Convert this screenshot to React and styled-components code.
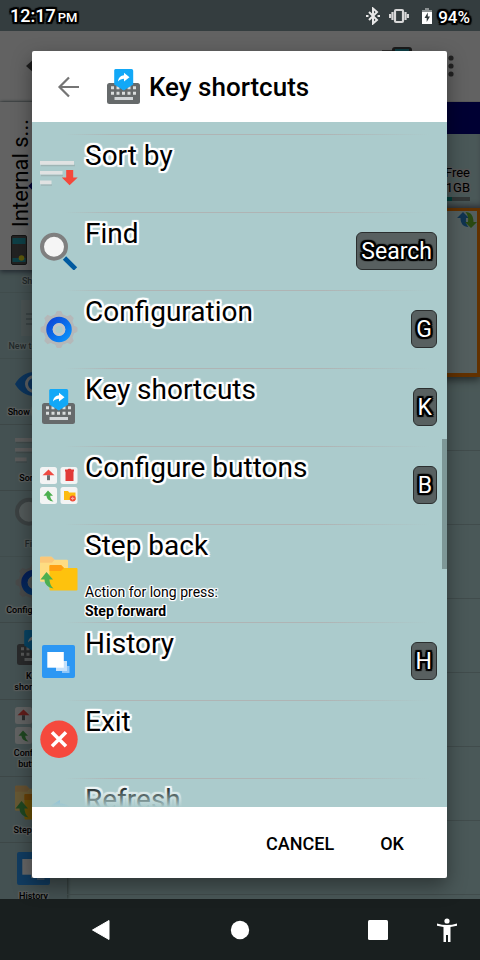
import React from "react";
import styled, { createGlobalStyle, css } from "styled-components";

const Global = createGlobalStyle`
  * { box-sizing: border-box; }
  html, body { margin: 0; background: #191f1f; }
  body { font-family: Roboto, "Liberation Sans", sans-serif; color: #000; }
  button { font: inherit; color: inherit; background: none; border: 0; padding: 0; cursor: pointer; }
  ul { list-style: none; margin: 0; padding: 0; }
  h1, h2, p { margin: 0; }
  svg { display: block; flex: none; }
`;

/* Rounded halo drawn behind the glyphs. */
const wideHalo = (color) => css`
  text-shadow:
    2px 0 1px ${color}, -2px 0 1px ${color}, 0 2px 1px ${color}, 0 -2px 1px ${color},
    2px 2px 1px ${color}, -2px 2px 1px ${color}, 2px -2px 1px ${color}, -2px -2px 1px ${color},
    1px 1px 0 ${color}, -1px 1px 0 ${color}, 1px -1px 0 ${color}, -1px -1px 0 ${color},
    2px 0 0 ${color}, -2px 0 0 ${color}, 0 2px 0 ${color}, 0 -2px 0 ${color};
`;

const thinHalo = (color) => css`
  text-shadow:
    1px 0 0 ${color}, -1px 0 0 ${color}, 0 1px 0 ${color}, 0 -1px 0 ${color},
    1px 1px 1px ${color}, -1px 1px 1px ${color}, 1px -1px 1px ${color}, -1px -1px 1px ${color},
    0 0 2px ${color}, 0 0 2px ${color};
`;

/* ---------- Icons ---------- */

const Icon = ({ size = 38, children }) => (
  <svg width={size} height={size} viewBox="0 0 38 38" aria-hidden="true">{children}</svg>
);

const SortIcon = () => (
  <Icon>
    <path d="M1 11.500h34M1 21.500h22M1 31h11" stroke="#9fb5b5" strokeWidth="1.500" />
    <path d="M0 7h34v3.800H0zM0 17h22.500v3.500H0zM0 26.500h11.500v3.700H0z" fill="#e0e2e2" />
    <path d="M26.200 16h7v7.500h4.500L29.600 31.300l-7.800-7.800h4.400z" fill="#f4483b" />
  </Icon>
);

const FindIcon = () => (
  <Icon>
    <path d="M24.500 26L35.500 37" stroke="#015a9f" strokeWidth="4.600" />
    <circle cx="14" cy="14.700" r="12" fill="#f5f5f5" stroke="#7f7f7f" strokeWidth="4" />
  </Icon>
);

const GearIcon = () => (
  <Icon>
    <defs>
      <linearGradient id="ring" x1="0" y1="0" x2="1" y2="1">
        <stop offset="0" stopColor="#0d47d8" />
        <stop offset="1" stopColor="#0a91fb" />
      </linearGradient>
    </defs>
    <circle cx="19" cy="19.500" r="13.500" fill="none" stroke="#b5b8b9" strokeWidth="4" />
    {[0, 45, 90, 135, 180, 225, 270, 315].map((a) => (
      <path key={a} d="M17 1.500h4l2.300 5.500h-8.600z" fill="#b5b8b9" stroke="#b5b8b9" strokeLinejoin="round" transform={`rotate(${a} 19 19.500)`} />
    ))}
    <circle cx="19" cy="19.500" r="9.500" fill="none" stroke="url(#ring)" strokeWidth="6.500" />
    <circle cx="19" cy="19.500" r="5" fill="none" stroke="#c3c6c8" strokeWidth="2.800" />
  </Icon>
);

const KeyboardIcon = () => (
  <Icon>
    <rect x="2" y="15" width="33" height="21" rx="2.500" fill="#666a6b" />
    <path d="M6 19.700h25M6 25.200h26" stroke="#dadddd" strokeWidth="3" strokeDasharray="3 2.500" />
    <path d="M9.500 30.500h18.500" stroke="#d2d6d8" strokeWidth="3" />
    <path d="M10.500 1h16q1.700 0 1.700 1.700V16.500L18.800 22.500 9.200 16.500V2.500Q9.200 1 10.500 1z" fill="#12a8f7" />
    <path d="M13 13.500c.5-4.300 3-6 6-6.300V4.800l5.500 4.500-5.500 4.200v-2.800c-2.500 0-4.300.8-6 2.800z" fill="#fff" />
  </Icon>
);

const TilesIcon = () => (
  <Icon>
    <g fill="#f3f4f4">
      <rect x="0" y="1" width="17" height="17" rx="2.500" />
      <rect x="20.500" y="1" width="17" height="17" rx="2.500" />
      <rect x="0" y="21" width="17" height="17" rx="2.500" />
      <rect x="20.500" y="21" width="17" height="17" rx="2.500" />
    </g>
    <path d="M8.500 3.500L14.500 9.200h-12z" fill="#ef4a42" />
    <path d="M8.500 9.200v5" stroke="#6b7072" strokeWidth="3" />
    <path d="M25 3.500h2.500l1-.8h2l1 .8H34V5.500h-9zM25.500 5.500h8V15h-8z" fill="#e13a38" />
    <path d="M8 24.500l5 5.300h-2.800c.2 2.500 1.300 4.200 3.300 5.700-4.300-.3-6.700-2.500-7-5.700H3.500z" fill="#4caf50" />
    <path d="M24 25h4l1.200 1.500h6.300V34H24z" fill="#fdbb10" />
    <circle cx="32.700" cy="32.500" r="3" fill="#ef4a36" />
    <path d="M31 32.500h3.400M32.700 30.800v3.400" stroke="#f7a99f" />
  </Icon>
);

const FoldersIcon = () => (
  <Icon>
    <path d="M1 2.700h10.500l3 3H27q1 0 1 1V27.700H1q-1 0-1-1v-23q0-1 1-1z" fill="#fedc82" />
    <path d="M1 2.700h10.500l3 3-2.500 3H0v-5q0-1 1-1z" fill="#fbc778" />
    <path d="M10.500 11H21l3 3h12.500q1 0 1 1v20.600q0 1-1 1H10.500q-1 0-1-1V12q0-1 1-1z" fill="#fec20d" />
    <path d="M10.500 11H21l3 3-3 3H9.500v-5q0-1 1-1z" fill="#ff9f12" />
    <path d="M6.500 18L13 25.500H9.500c.2 4.300 1.500 6.500 4 9-5.500-1-8.800-4-9-9H.5z" fill="#4caf50" />
  </Icon>
);

const HistoryIcon = () => (
  <Icon>
    <rect x="2" y="3" width="33" height="33" rx="2" fill="#2c97f3" />
    <path d="M22 24h7.500v7H22z" fill="#8fc6f8" />
    <path d="M16 19h11v10H16z" fill="#c5e1fb" />
    <path d="M7.300 10h16.500v15.700H7.300z" fill="#fff" />
  </Icon>
);

const ExitIcon = () => (
  <Icon>
    <circle cx="19" cy="19.300" r="18.700" fill="#f5493d" />
    <path d="M12 12.300L26 26.300M26 12.300L12 26.300" stroke="#fff" strokeWidth="3.500" />
  </Icon>
);

const RefreshIcon = () => (
  <Icon>
    <path d="M11 7.500L20 2v3.500c9 0 14 6 13 14-2-5-6-9-13-9V14z" fill="#4cadf8" />
    <path d="M26 31l-7 6v-3.500c-9 0-15-7-14-15 2 5 6 9 14 9V24z" fill="#8bc34a" />
  </Icon>
);

const EyeIcon = () => (
  <Icon>
    <path d="M0 19C9 3 29 3 38 19 29 35 9 35 0 19z" fill="#1c82e8" />
    <circle cx="19" cy="19" r="7.500" fill="none" stroke="#e8eef2" strokeWidth="3" />
  </Icon>
);

const NoteIcon = () => (
  <Icon>
    <path d="M6 1h26v36H6z" fill="#c9d4d4" />
    <path d="M11 15h16M11 20h16M11 25h16" stroke="#7f8d8d" strokeWidth="2" />
  </Icon>
);

const DeviceIcon = () => (
  <svg width="30" height="38" viewBox="0 0 30 38" aria-hidden="true">
    <path d="M0 3h10v32H0z" fill="#777" />
    <rect x="10" y="0" width="20" height="38" rx="3" fill="#444" />
    <path d="M13 2h14v30H13z" fill="#259fae" />
  </svg>
);

const BackArrow = () => (
  <svg width="22" height="22" viewBox="0 0 22 22" aria-hidden="true">
    <path d="M22 11H2.500M12 1.500L2.500 11l9.500 9.500" fill="none" stroke="#757575" strokeWidth="2.200" />
  </svg>
);

const PhoneIcon = () => (
  <svg width="16" height="30" viewBox="0 0 16 30" aria-hidden="true">
    <rect x=".5" y=".5" width="15" height="29" rx="1.500" fill="#555" stroke="#333" />
    <path d="M1.500 3h13v6h-13zM1.500 23h13v4h-13z" fill="#259fae" />
    <circle cx="10.500" cy="23" r="2.800" fill="#e5dc20" />
  </svg>
);

const SyncIcon = () => (
  <svg width="20" height="18" viewBox="0 0 20 18" aria-hidden="true">
    <path d="M6 1l6 6H9c-.5 4 .5 7 2.500 9C6 16 3.500 12 3.500 7H0z" fill="#2880c8" />
    <path d="M14 17l-6-6h3c.5-4 0-7-2.500-10 5.500 0 8 4 8 10H20z" fill="#67b52c" />
  </svg>
);

const BluetoothIcon = () => (
  <svg width="14" height="18" viewBox="0 0 14 18" aria-hidden="true">
    <path d="M3 5l8 8-4 3.500v-15L11 5l-8 8M0 9h2.500M11.500 9H14" fill="none" stroke="#e8e8e8" strokeWidth="2" />
  </svg>
);

const VibrateIcon = () => (
  <svg width="20" height="16" viewBox="0 0 20 16" aria-hidden="true">
    <path d="M1 6v4M3.500 4v8M16.500 4v8M19 6v4" stroke="#d8d8d8" strokeWidth="2.200" />
    <rect x="6" y="2" width="8" height="12" rx="1" fill="none" stroke="#d8d8d8" strokeWidth="2.200" />
  </svg>
);

const BatteryIcon = () => (
  <svg width="10" height="16" viewBox="0 0 10 16" aria-hidden="true">
    <path d="M3 0h4v2h3v3H0V2h3z" fill="#8c9293" />
    <path d="M0 4h10v12H0z" fill="#fff" />
    <path d="M5.800 4.500L2.500 10h2.200v4L8 8.500H5.800z" fill="#30393b" />
  </svg>
);

/* ---------- Device shell ---------- */

const Screen = styled.div`
  display: flex;
  flex-direction: column;
  height: 100vh;
  min-height: 480px;
`;

const StatusBar = styled.header`
  display: flex;
  align-items: center;
  height: 31px;
  flex: none;
  padding: 3px 10px 0;
  background: #343d3f;
  color: #fff;
`;

const Clock = styled.span`
  flex: 1;
  font-size: 18px;
  font-weight: 500;
  line-height: 24px;
  ${wideHalo("#000")}
`;

const Meridiem = styled.span`
  margin-left: 2px;
  font-size: 13px;
`;

const StatusIcons = styled.div`
  display: flex;
  align-items: center;
  gap: 9px;
  margin-right: 6px;
  padding-bottom: 3px;
`;

const BatterySlot = styled.span`
  margin-left: 4px;
`;

const BatteryLevel = styled.span`
  font-size: 17px;
  font-weight: 500;
  line-height: 24px;
  ${wideHalo("#000")}
`;

const Stage = styled.div`
  position: relative;
  flex: 1;
  min-height: 0;
`;

const NavBar = styled.nav`
  display: grid;
  grid-template-columns: 30px 1fr 30px 1fr 30px 39px 30px;
  align-items: center;
  height: 61px;
  flex: none;
  padding: 0 18px 0 86px;
  background: #191f1f;
`;

const NavButton = styled.button`
  display: grid;
  place-items: center;
  height: 44px;
  grid-column: ${(p) => p.$column};
`;

/* ---------- File manager behind the dialog ---------- */

const FileManager = styled.div`
  display: flex;
  flex-direction: column;
  height: 100%;
  overflow: hidden;
  background: #b9dcdb;
`;

const AppBar = styled.div`
  display: flex;
  align-items: center;
  justify-content: space-between;
  height: 71px;
  flex: none;
  padding: 0 26px;
  background: #f6f6f6;
  border-bottom: 1px solid #dedede;
`;

const AppBarActions = styled.div`
  display: flex;
  align-items: center;
  gap: 36px;
`;

const Workspace = styled.div`
  display: grid;
  grid-template-columns: 67px 1fr;
  flex: 1;
  min-height: 0;
`;

const Side = styled.div`
  display: flex;
  flex-direction: column;
  min-height: 0;
  background: #abcbcc;
  box-shadow: 1px 0 3px #6f8484;
`;

const StorageTab = styled.div`
  position: relative;
  display: flex;
  flex-direction: column;
  align-items: flex-start;
  justify-content: flex-end;
  gap: 8px;
  height: 168px;
  flex: none;
  padding: 0 0 5px 11px;
  background: #f6f6f6;
  box-shadow: 0 2px 5px #567;

  &::after {
    content: "";
    position: absolute;
    left: 30px;
    top: 80px;
    width: 8px;
    height: 8px;
    background: #000080;
    transform: rotate(45deg);
  }
`;

const TabLabel = styled.span`
  writing-mode: vertical-rl;
  transform: rotate(180deg);
  font-size: 22px;
  line-height: 20px;
  white-space: nowrap;
`;

const Tools = styled.div`
  overflow: hidden;
`;

const Tool = styled.button`
  display: flex;
  flex-direction: column;
  align-items: center;
  gap: 4px;
  width: 100%;
  padding: ${(p) => (p.$labelOnly ? "6px 0 5px" : "6px 0")};
  border-bottom: 1px solid #98b1b1;
  font-size: 9px;
  font-weight: 500;
  line-height: 11px;
  opacity: ${(p) => (p.$faded ? 0.5 : 1)};
`;

const ToolLabel = styled.span`
  white-space: pre-line;
  ${thinHalo("#dde8e8")}
`;

const Pane = styled.div`
  display: flex;
  flex-direction: column;
  min-width: 0;
`;

const PathBar = styled.div`
  height: 32px;
  flex: none;
  background: #000080;
`;

const Capacity = styled.div`
  display: flex;
  flex-direction: column;
  align-items: flex-end;
  justify-content: flex-end;
  gap: 2px;
  height: 74px;
  flex: none;
  padding: 0 10px 7px 0;
  font-size: 13px;
  line-height: 15px;
  text-align: right;
  box-shadow: inset 0 -5px 6px -3px #778;
`;

const CapacityText = styled.span`
  ${thinHalo("#d5d5d5")}
`;

const CapacityMeter = styled.div`
  width: 36px;
  height: 4px;
  border-left: 18px solid #00968a;
  background: #7f8b8b;
`;

const Selection = styled.div`
  display: flex;
  align-items: flex-start;
  justify-content: flex-end;
  height: 169px;
  flex: none;
  border: 3px solid #f57c00;
  border-bottom-width: 4px;
  background: #cfecec;
  box-shadow: 0 3px 8px #566;
`;

const FileRow = styled.div`
  height: 74px;
  flex: none;
  border-bottom: 1px solid #a3bdbd;
`;

/* ---------- Dialog ---------- */

const Scrim = styled.div`
  position: absolute;
  inset: 0;
  display: flex;
  padding: 20px 33px 21px 32px;
  background: rgba(0, 0, 0, 0.6);
`;

const Dialog = styled.section`
  display: flex;
  flex-direction: column;
  flex: 1;
  min-width: 0;
  overflow: hidden;
  border-radius: 2px;
  background: #fff;
  box-shadow: 0 8px 20px rgba(0, 0, 0, 0.4);
`;

const DialogHeader = styled.header`
  display: flex;
  align-items: center;
  height: 71px;
  flex: none;
  padding: 0 25px;
`;

const BackButton = styled.button`
  margin-right: 26px;
`;

const DialogTitle = styled.h1`
  margin-left: 6px;
  font-size: 26px;
  font-weight: 500;
  line-height: 32px;
`;

const ListArea = styled.div`
  position: relative;
  flex: 1;
  min-height: 0;
  background: #abcbcc;

  &::after {
    content: "";
    position: absolute;
    inset: auto 0 0;
    height: 24px;
    background: linear-gradient(rgba(171, 203, 204, 0), #abcbcc);
    pointer-events: none;
  }
`;

const divider = css`
  background: linear-gradient(90deg, transparent 8%, #afb4b4 20%, #afb4b4 70%, transparent 96%) bottom / 100% 1px no-repeat;
`;

const CommandList = styled.ul`
  height: 100%;
  overflow-y: auto;
  scrollbar-width: none;
`;

const ListLead = styled.li`
  height: 13px;
  ${divider}
`;

const Command = styled.button`
  display: grid;
  grid-template-columns: 38px 1fr auto;
  column-gap: 7px;
  align-items: center;
  width: 100%;
  min-height: 78px;
  padding: 0 10px 2px 8px;
  text-align: left;
  ${divider}
`;

const CommandText = styled.span`
  display: flex;
  flex-direction: column;
  gap: 16px;
  align-self: start;
`;

const CommandName = styled.span`
  font-size: 28px;
  line-height: 42px;
  ${wideHalo("#fff")}
`;

const LongPress = styled.span`
  display: block;
  font-size: 14px;
  line-height: 19px;
  ${thinHalo("#fff")}
`;

const LongPressAction = styled.strong`
  display: block;
  font-weight: 700;
`;

const KeyCap = styled.kbd`
  height: 38px;
  padding: 0 4px;
  border: 1px solid #2b2f2f;
  border-radius: 6px;
  background: #586060;
  color: #fff;
  font-family: inherit;
  font-size: 23px;
  line-height: 38px;
  ${wideHalo("#000")}
`;

const ScrollThumb = styled.div`
  position: absolute;
  top: 317px;
  right: 0;
  width: 5px;
  height: 130px;
  background: #7e9797;
`;

const DialogFooter = styled.footer`
  display: flex;
  align-items: center;
  justify-content: flex-end;
  gap: 14px;
  height: 71px;
  flex: none;
  padding: 2px 27px 0;
`;

const TextButton = styled.button`
  height: 48px;
  padding: 0 16px;
  font-size: 18px;
  font-weight: 500;
`;

const tools = [
  { name: "Share", labelOnly: true, faded: true },
  { name: "New text file", icon: NoteIcon, faded: true },
  { name: "Show hidden", icon: EyeIcon },
  { name: "Sort by", icon: SortIcon },
  { name: "Find", icon: FindIcon, faded: true },
  { name: "Configuration", icon: GearIcon },
  { name: "Key\nshortcuts", icon: KeyboardIcon },
  { name: "Configure\nbuttons", icon: TilesIcon },
  { name: "Step back", icon: FoldersIcon },
  { name: "History", icon: HistoryIcon },
];

const commands = [
  { name: "Sort by", icon: SortIcon },
  { name: "Find", icon: FindIcon, shortcut: "Search" },
  { name: "Configuration", icon: GearIcon, shortcut: "G" },
  { name: "Key shortcuts", icon: KeyboardIcon, shortcut: "K" },
  { name: "Configure buttons", icon: TilesIcon, shortcut: "B" },
  { name: "Step back", icon: FoldersIcon, longPress: "Step forward" },
  { name: "History", icon: HistoryIcon, shortcut: "H" },
  { name: "Exit", icon: ExitIcon },
  { name: "Refresh", icon: RefreshIcon },
];

const Background = () => (
  <FileManager aria-hidden="true" inert>
    <AppBar>
      <svg width="20" height="20" viewBox="0 0 20 20"><path d="M0 10l9-8v6h11v4H9v6z" fill="#4a4a4a" /></svg>
      <AppBarActions>
        <DeviceIcon />
        <svg width="6" height="22" viewBox="0 0 6 22"><g fill="#555"><circle cx="3" cy="3" r="2.600" /><circle cx="3" cy="11" r="2.600" /><circle cx="3" cy="19" r="2.600" /></g></svg>
      </AppBarActions>
    </AppBar>
    <Workspace>
      <Side>
        <StorageTab>
          <TabLabel>Internal s...</TabLabel>
          <PhoneIcon />
        </StorageTab>
        <Tools>
          {tools.map(({ name, icon: Glyph, labelOnly, faded }) => (
            <Tool key={name} $labelOnly={labelOnly} $faded={faded}>
              {Glyph && <Glyph />}
              <ToolLabel>{name}</ToolLabel>
            </Tool>
          ))}
        </Tools>
      </Side>
      <Pane>
        <PathBar />
        <Capacity>
          <CapacityText>Free<br />1GB</CapacityText>
          <CapacityMeter />
        </Capacity>
        <Selection><SyncIcon /></Selection>
        {[0, 1, 2, 3, 4, 5, 6].map((n) => <FileRow key={n} />)}
      </Pane>
    </Workspace>
  </FileManager>
);

export default function App() {
  return (
    <Screen>
      <Global />
      <StatusBar>
        <Clock>12:17<Meridiem>PM</Meridiem></Clock>
        <StatusIcons>
          <BluetoothIcon />
          <VibrateIcon />
          <BatterySlot><BatteryIcon /></BatterySlot>
        </StatusIcons>
        <BatteryLevel>94%</BatteryLevel>
      </StatusBar>
      <Stage>
        <Background />
        <Scrim>
          <Dialog role="dialog" aria-labelledby="dialog-title">
            <DialogHeader>
              <BackButton aria-label="Back"><BackArrow /></BackButton>
              <KeyboardIcon />
              <DialogTitle id="dialog-title">Key shortcuts</DialogTitle>
            </DialogHeader>
            <ListArea>
              <CommandList>
                <ListLead aria-hidden="true" />
                {commands.map(({ name, icon: Glyph, shortcut, longPress }) => (
                  <li key={name}>
                    <Command>
                      <Glyph />
                      <CommandText>
                        <CommandName>{name}</CommandName>
                        {longPress && (
                          <LongPress>
                            Action for long press:
                            <LongPressAction>{longPress}</LongPressAction>
                          </LongPress>
                        )}
                      </CommandText>
                      {shortcut && <KeyCap>{shortcut}</KeyCap>}
                    </Command>
                  </li>
                ))}
              </CommandList>
              <ScrollThumb />
            </ListArea>
            <DialogFooter>
              <TextButton>CANCEL</TextButton>
              <TextButton>OK</TextButton>
            </DialogFooter>
          </Dialog>
        </Scrim>
      </Stage>
      <NavBar>
        <NavButton $column={1} aria-label="Back">
          <svg width="20" height="22" viewBox="0 0 20 22"><path d="M18 1.500V20.500L1.500 11z" fill="#fff" stroke="#fff" strokeLinejoin="round" /></svg>
        </NavButton>
        <NavButton $column={3} aria-label="Home">
          <svg width="20" height="20" viewBox="0 0 20 20"><circle cx="10" cy="10" r="9.200" fill="#fff" /></svg>
        </NavButton>
        <NavButton $column={5} aria-label="Recent apps">
          <svg width="20" height="20" viewBox="0 0 20 20"><rect width="20" height="20" rx="1.500" fill="#fff" /></svg>
        </NavButton>
        <NavButton $column={7} aria-label="Accessibility">
          <svg width="20" height="24" viewBox="0 0 20 24">
            <circle cx="10" cy="3" r="2.600" fill="#fff" />
            <path d="M0 5.500Q10 8.500 20 5.500V7.700L13.500 9V24H11V17H9V24H6.500V9L0 7.700z" fill="#fff" />
          </svg>
        </NavButton>
      </NavBar>
    </Screen>
  );
}
